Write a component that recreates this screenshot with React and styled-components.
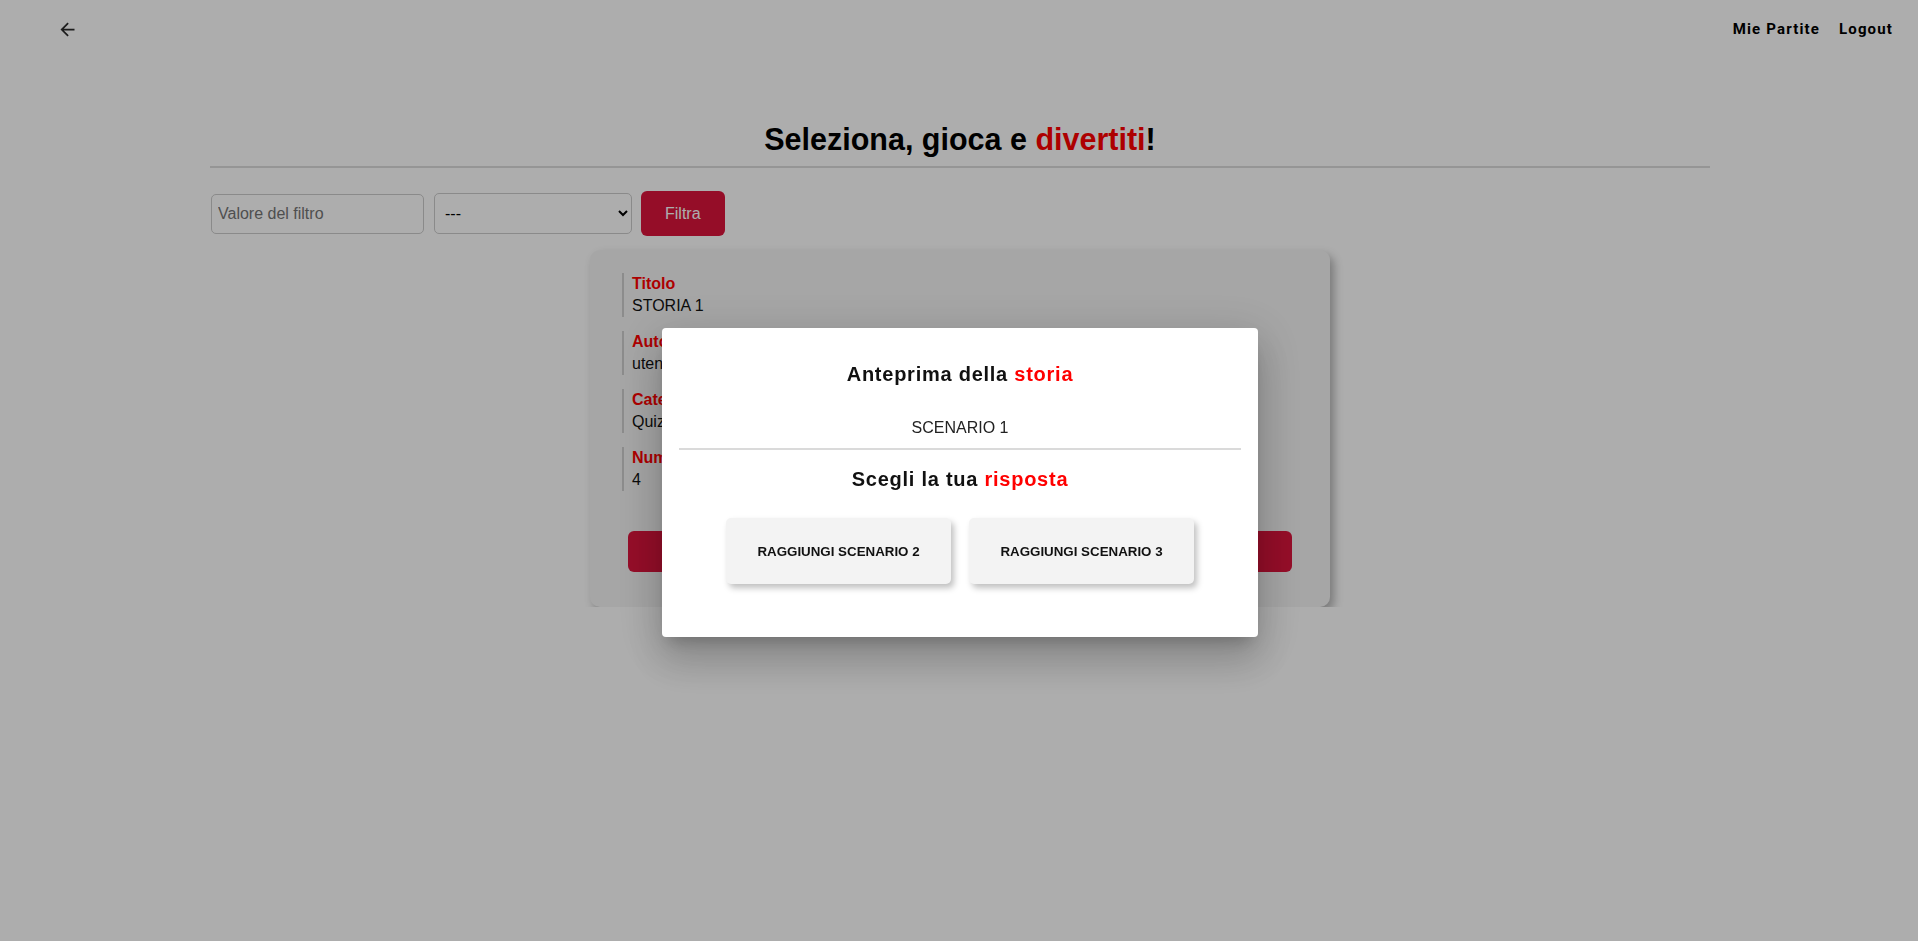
import React from 'react';
import styled, { createGlobalStyle } from 'styled-components';

const GlobalStyle = createGlobalStyle`
  body {
    margin: 0;
    background: #ffffff;
    font-family: "Liberation Sans", Arial, sans-serif;
    color: #000;
  }
`;

const Header = styled.header`
  display: flex;
  align-items: center;
  justify-content: space-between;
  height: 58px;
  padding: 0 25px 0 57px;
`;

const BackButton = styled.button`
  display: flex;
  align-items: center;
  padding: 0;
  border: none;
  background: none;
  color: #2b2b2b;
  cursor: pointer;
`;

const Nav = styled.nav`
  display: flex;
  align-items: center;
  gap: 19px;
`;

const NavLink = styled.a`
  font-family: Roboto, "Liberation Sans", sans-serif;
  font-size: 15px;
  font-weight: 700;
  letter-spacing: 1.15px;
  color: #000;
  text-decoration: none;
  cursor: pointer;
`;

const Main = styled.main`
  width: 1500px;
  margin: 64px auto 0;
  padding-left: 2px;
`;

const Heading = styled.h1`
  margin: 0;
  text-align: center;
  font-size: 30.5px;
  line-height: 35px;
  font-weight: 700;
`;

const Accent = styled.span`
  color: ${(p) => p.$color || '#ff0000'};
`;

const Rule = styled.div`
  margin-top: 9px;
  border-top: 2px solid #dcdcdc;
`;

const FilterBar = styled.div`
  display: flex;
  align-items: center;
  margin-top: 23px;
`;

const FilterInput = styled.input`
  box-sizing: border-box;
  width: 213px;
  height: 40px;
  margin-left: 1px;
  padding: 0 6px;
  border: 1px solid #cccccc;
  border-radius: 5px;
  font-family: "Liberation Sans", Arial, sans-serif;
  font-size: 16px;
  background: #fff;

  &::placeholder {
    color: #757575;
  }
`;

const FilterSelect = styled.select`
  box-sizing: border-box;
  width: 198px;
  height: 41px;
  margin-left: 10px;
  padding: 0 6px;
  border: 1px solid #cccccc;
  border-radius: 5px;
  font-family: "Liberation Sans", Arial, sans-serif;
  font-size: 16px;
  background: #fff;
  color: #000;
`;

const FilterButton = styled.button`
  height: 45px;
  margin-left: 9px;
  padding: 0 24px;
  border: none;
  border-radius: 6px;
  background: crimson;
  color: #fff;
  font-family: "Liberation Sans", Arial, sans-serif;
  font-size: 16px;
  cursor: pointer;
`;

const StoryCard = styled.section`
  box-sizing: border-box;
  width: 740px;
  margin: 14px auto 0;
  padding: 23px 38px 35px 32px;
  background: #f5f5f5;
  border-radius: 10px;
  box-shadow: 4px 5px 10px rgba(0, 0, 0, 0.3);
`;

const Field = styled.div`
  padding-left: 8px;
  border-left: 2px solid #cfcfcf;
  font-size: 16px;
  line-height: 22px;

  & + & {
    margin-top: 14px;
  }
`;

const FieldLabel = styled.div`
  font-weight: 700;
  color: #ff0000;
`;

const FieldValue = styled.div`
  color: #111;
`;

const PlayButton = styled.button`
  display: block;
  width: calc(100% - 6px);
  height: 41px;
  margin: 40px 0 0 6px;
  border: none;
  border-radius: 6px;
  background: crimson;
  color: #fff;
  font-family: "Liberation Sans", Arial, sans-serif;
  font-size: 16px;
  font-weight: 700;
`;

const Backdrop = styled.div`
  position: fixed;
  inset: 0;
  display: flex;
  justify-content: center;
  align-items: flex-start;
  padding: 328px 0 0 2px;
  background: rgba(0, 0, 0, 0.32);
`;

const Dialog = styled.div`
  box-sizing: border-box;
  width: 596px;
  padding: 0 17px 53px;
  background: #ffffff;
  border-radius: 4px;
  box-shadow: 0 11px 15px -7px rgba(0, 0, 0, 0.2),
    0 24px 38px 3px rgba(0, 0, 0, 0.14), 0 9px 46px 8px rgba(0, 0, 0, 0.12);
`;

const DialogHeading = styled.h2`
  margin: ${(p) => p.$top}px 0 0;
  text-align: center;
  font-size: 20px;
  line-height: 23px;
  font-weight: 700;
  letter-spacing: 0.75px;
  color: #111;
`;

const ScenarioText = styled.p`
  margin: 33px 0 0;
  text-align: center;
  font-size: 16px;
  line-height: 18px;
  color: #222;
`;

const Divider = styled.div`
  margin-top: 11px;
  border-top: 2px solid #dadada;
`;

const Choices = styled.div`
  display: flex;
  justify-content: center;
  gap: 18px;
  margin-top: 27px;
`;

const ChoiceButton = styled.button`
  width: 225px;
  height: 66px;
  border: none;
  border-radius: 5px;
  background: #f3f3f3;
  box-shadow: 3px 4px 6px rgba(0, 0, 0, 0.25);
  font-family: "Liberation Sans", Arial, sans-serif;
  font-size: 13.333px;
  font-weight: 700;
  color: #111;
  cursor: pointer;
`;

const fields = [
  ['Titolo', 'STORIA 1'],
  ['Autore', 'utente1'],
  ['Categoria', 'Quiz'],
  ['Numero scenari', '4'],
];

export default function App() {
  return (
    <>
      <GlobalStyle />
      <Header>
        <BackButton aria-label="Indietro">
          <svg width="21" height="21" viewBox="0 0 24 24" fill="currentColor">
            <path d="M20 11H7.83l5.59-5.59L12 4l-8 8 8 8 1.41-1.41L7.83 13H20v-2z" />
          </svg>
        </BackButton>
        <Nav>
          <NavLink>Mie Partite</NavLink>
          <NavLink>Logout</NavLink>
        </Nav>
      </Header>
      <Main>
        <Heading>
          Seleziona, gioca e <Accent>divertiti</Accent>!
        </Heading>
        <Rule />
        <FilterBar>
          <FilterInput placeholder="Valore del filtro" />
          <FilterSelect defaultValue="">
            <option value="">---</option>
            <option value="titolo">Titolo</option>
            <option value="autore">Autore</option>
            <option value="categoria">Categoria</option>
          </FilterSelect>
          <FilterButton>Filtra</FilterButton>
        </FilterBar>
        <StoryCard>
          {fields.map(([label, value]) => (
            <Field key={label}>
              <FieldLabel>{label}</FieldLabel>
              <FieldValue>{value}</FieldValue>
            </Field>
          ))}
          <PlayButton>Gioca</PlayButton>
        </StoryCard>
      </Main>
      <Backdrop>
        <Dialog>
          <DialogHeading $top={35}>
            Anteprima della <Accent>storia</Accent>
          </DialogHeading>
          <ScenarioText>SCENARIO 1</ScenarioText>
          <Divider />
          <DialogHeading $top={18}>
            Scegli la tua <Accent>risposta</Accent>
          </DialogHeading>
          <Choices>
            <ChoiceButton>RAGGIUNGI SCENARIO 2</ChoiceButton>
            <ChoiceButton>RAGGIUNGI SCENARIO 3</ChoiceButton>
          </Choices>
        </Dialog>
      </Backdrop>
    </>
  );
}
